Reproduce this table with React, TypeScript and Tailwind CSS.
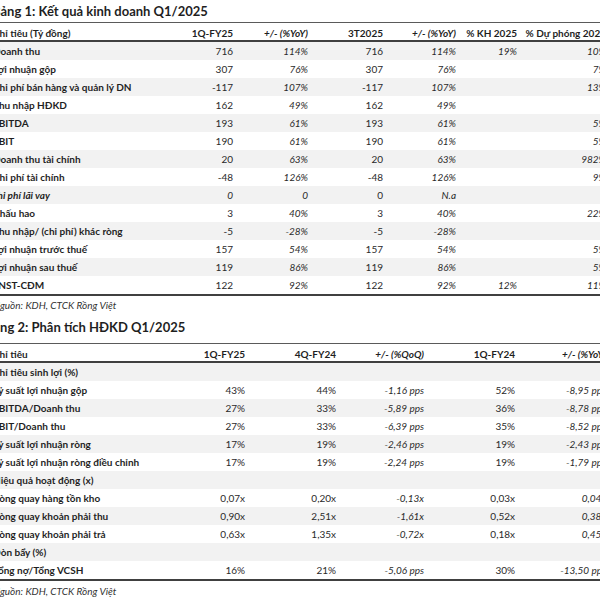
import React from "react";

type Cell = { t: string; i?: boolean };

const font = { fontFamily: "Lato, 'Open Sans', 'Liberation Sans', sans-serif" };

const t1Rows: { label: string; li?: boolean; cells: Cell[] }[] = [
  { label: "Doanh thu", cells: [{ t: "716" }, { t: "114%", i: true }, { t: "716" }, { t: "114%", i: true }, { t: "19%", i: true }, { t: "10%", i: true }] },
  { label: "Lợi nhuận gộp", cells: [{ t: "307" }, { t: "76%", i: true }, { t: "307" }, { t: "76%", i: true }, { t: "" }, { t: "7%", i: true }] },
  { label: "Chi phí bán hàng và quản lý DN", cells: [{ t: "-117" }, { t: "107%", i: true }, { t: "-117" }, { t: "107%", i: true }, { t: "" }, { t: "13%", i: true }] },
  { label: "Thu nhập HĐKD", cells: [{ t: "162" }, { t: "49%", i: true }, { t: "162" }, { t: "49%", i: true }, { t: "" }, { t: "" }] },
  { label: "EBITDA", cells: [{ t: "193" }, { t: "61%", i: true }, { t: "193" }, { t: "61%", i: true }, { t: "" }, { t: "5%", i: true }] },
  { label: "EBIT", cells: [{ t: "190" }, { t: "61%", i: true }, { t: "190" }, { t: "61%", i: true }, { t: "" }, { t: "5%", i: true }] },
  { label: "Doanh thu tài chính", cells: [{ t: "20" }, { t: "63%", i: true }, { t: "20" }, { t: "63%", i: true }, { t: "" }, { t: "982%", i: true }] },
  { label: "Chi phí tài chính", cells: [{ t: "-48" }, { t: "126%", i: true }, { t: "-48" }, { t: "126%", i: true }, { t: "" }, { t: "9%", i: true }] },
  { label: "chi phí lãi vay", li: true, cells: [{ t: "0", i: true }, { t: "0", i: true }, { t: "0" }, { t: "N.a", i: true }, { t: "" }, { t: "" }] },
  { label: "Khấu hao", cells: [{ t: "3" }, { t: "40%", i: true }, { t: "3" }, { t: "40%", i: true }, { t: "" }, { t: "22%", i: true }] },
  { label: "Thu nhập/ (chi phí) khác ròng", cells: [{ t: "-5" }, { t: "-28%", i: true }, { t: "-5" }, { t: "-28%", i: true }, { t: "" }, { t: "" }] },
  { label: "Lợi nhuận trước thuế", cells: [{ t: "157" }, { t: "54%", i: true }, { t: "157" }, { t: "54%", i: true }, { t: "" }, { t: "5%", i: true }] },
  { label: "Lợi nhuận sau thuế", cells: [{ t: "119" }, { t: "86%", i: true }, { t: "119" }, { t: "86%", i: true }, { t: "" }, { t: "5%", i: true }] },
  { label: "LNST-CĐM", cells: [{ t: "122" }, { t: "92%", i: true }, { t: "122" }, { t: "92%", i: true }, { t: "12%", i: true }, { t: "11%", i: true }] },
];

const t2Rows: { label: string; section?: boolean; cells: string[] }[] = [
  { label: "Chỉ tiêu sinh lợi (%)", section: true, cells: [] },
  { label: "Tỷ suất lợi nhuận gộp", cells: ["43%", "44%", "-1,16 pps", "52%", "-8,95 pps"] },
  { label: "EBITDA/Doanh thu", cells: ["27%", "33%", "-5,89 pps", "36%", "-8,78 pps"] },
  { label: "EBIT/Doanh thu", cells: ["27%", "33%", "-6,39 pps", "35%", "-8,52 pps"] },
  { label: "Tỷ suất lợi nhuận ròng", cells: ["17%", "19%", "-2,46 pps", "19%", "-2,43 pps"] },
  { label: "Tỷ suất lợi nhuận ròng điều chỉnh", cells: ["17%", "19%", "-2,24 pps", "19%", "-1,79 pps"] },
  { label: "Hiệu quả hoạt động (x)", section: true, cells: [] },
  { label: "Vòng quay hàng tồn kho", cells: ["0,07x", "0,20x", "-0,13x", "0,03x", "0,04x"] },
  { label: "Vòng quay khoản phải thu", cells: ["0,90x", "2,51x", "-1,61x", "0,52x", "0,38x"] },
  { label: "Vòng quay khoản phải trả", cells: ["0,63x", "1,35x", "-0,72x", "0,18x", "0,45x"] },
  { label: "Đòn bẩy (%)", section: true, cells: [] },
  { label: "Tổng nợ/Tổng VCSH", cells: ["16%", "21%", "-5,06 pps", "30%", "-13,50 pps"] },
];

const g1 = "grid grid-cols-[190px_50px_75px_75px_73px_61px_89px]";
const g2 = "grid grid-cols-[200px_52px_91px_88px_91px_91px]";

export default function App() {
  return (
    <div className="w-[600px] h-[600px] overflow-hidden bg-white text-[#1f1f1f]" style={font}>
      <div className="-ml-[7px] w-[630px]">
        {/* Table 1 */}
        <div className="-ml-[1px] h-[22px] flex items-center text-[13px] font-bold leading-none">
          Bảng 1: Kết quả kinh doanh Q1/2025
        </div>
        <div className="border-t border-[#5a5a5a]">
          <div className={`${g1} h-[19px] items-end pb-[1px] text-[10px] font-bold leading-[12px] border-b-2 border-[#404040]`}>
            <div>Chỉ tiêu (Tỷ đồng)</div>
            <div className="text-right">1Q-FY25</div>
            <div className="text-right italic">+/- (%YoY)</div>
            <div className="text-right">3T2025</div>
            <div className="text-right italic">+/- (%YoY)</div>
            <div className="text-right">% KH 2025</div>
            <div className="text-right whitespace-nowrap">% Dự phóng 2025</div>
          </div>
          {t1Rows.map((r, idx) => (
            <div
              key={r.label}
              className={`${g1} h-[18px] items-center text-[10px] leading-[12px] ${idx % 2 === 0 ? "bg-[#f2f2f2]" : "bg-white"}`}
            >
              <div className={`font-bold ${r.li ? "italic" : ""}`}>{r.label}</div>
              {r.cells.map((c, j) => (
                <div key={j} className={`text-right text-[#2a2a2a] ${c.i ? "italic" : ""}`}>
                  {c.t}
                </div>
              ))}
            </div>
          ))}
          <div className="border-b-2 border-[#404040]" />
        </div>
        <div className="h-[19px] flex items-center text-[10px] italic text-[#333]">Nguồn: KDH, CTCK Rồng Việt</div>

        {/* Table 2 */}
        <div className="-ml-[8px] h-[28px] pb-[3px] flex items-center text-[13px] font-bold leading-none">
          Bảng 2: Phân tích HĐKD Q1/2025
        </div>
        <div className="border-t border-[#5a5a5a]">
          <div className={`${g2} h-[19px] items-end pb-[1px] text-[10px] font-bold leading-[12px] border-b-2 border-[#404040]`}>
            <div>Chỉ tiêu</div>
            <div className="text-right">1Q-FY25</div>
            <div className="text-right">4Q-FY24</div>
            <div className="text-right italic">+/- (%QoQ)</div>
            <div className="text-right">1Q-FY24</div>
            <div className="text-right italic">+/- (%YoY)</div>
          </div>
          {t2Rows.map((r, idx) => (
            <div
              key={r.label}
              className={`${g2} h-[18px] items-center text-[10px] leading-[12px] ${idx % 2 === 0 ? "bg-[#f2f2f2]" : "bg-white"}`}
            >
              <div className="font-bold whitespace-nowrap">{r.label}</div>
              {r.cells.map((c, j) => (
                <div key={j} className={`text-right text-[#2a2a2a] whitespace-nowrap ${j === 2 || j === 4 ? "italic" : ""}`}>
                  {c}
                </div>
              ))}
            </div>
          ))}
          <div className="border-b-2 border-[#404040]" />
        </div>
        <div className="h-[20px] flex items-center text-[10px] italic text-[#333]">Nguồn: KDH, CTCK Rồng Việt</div>
      </div>
    </div>
  );
}
